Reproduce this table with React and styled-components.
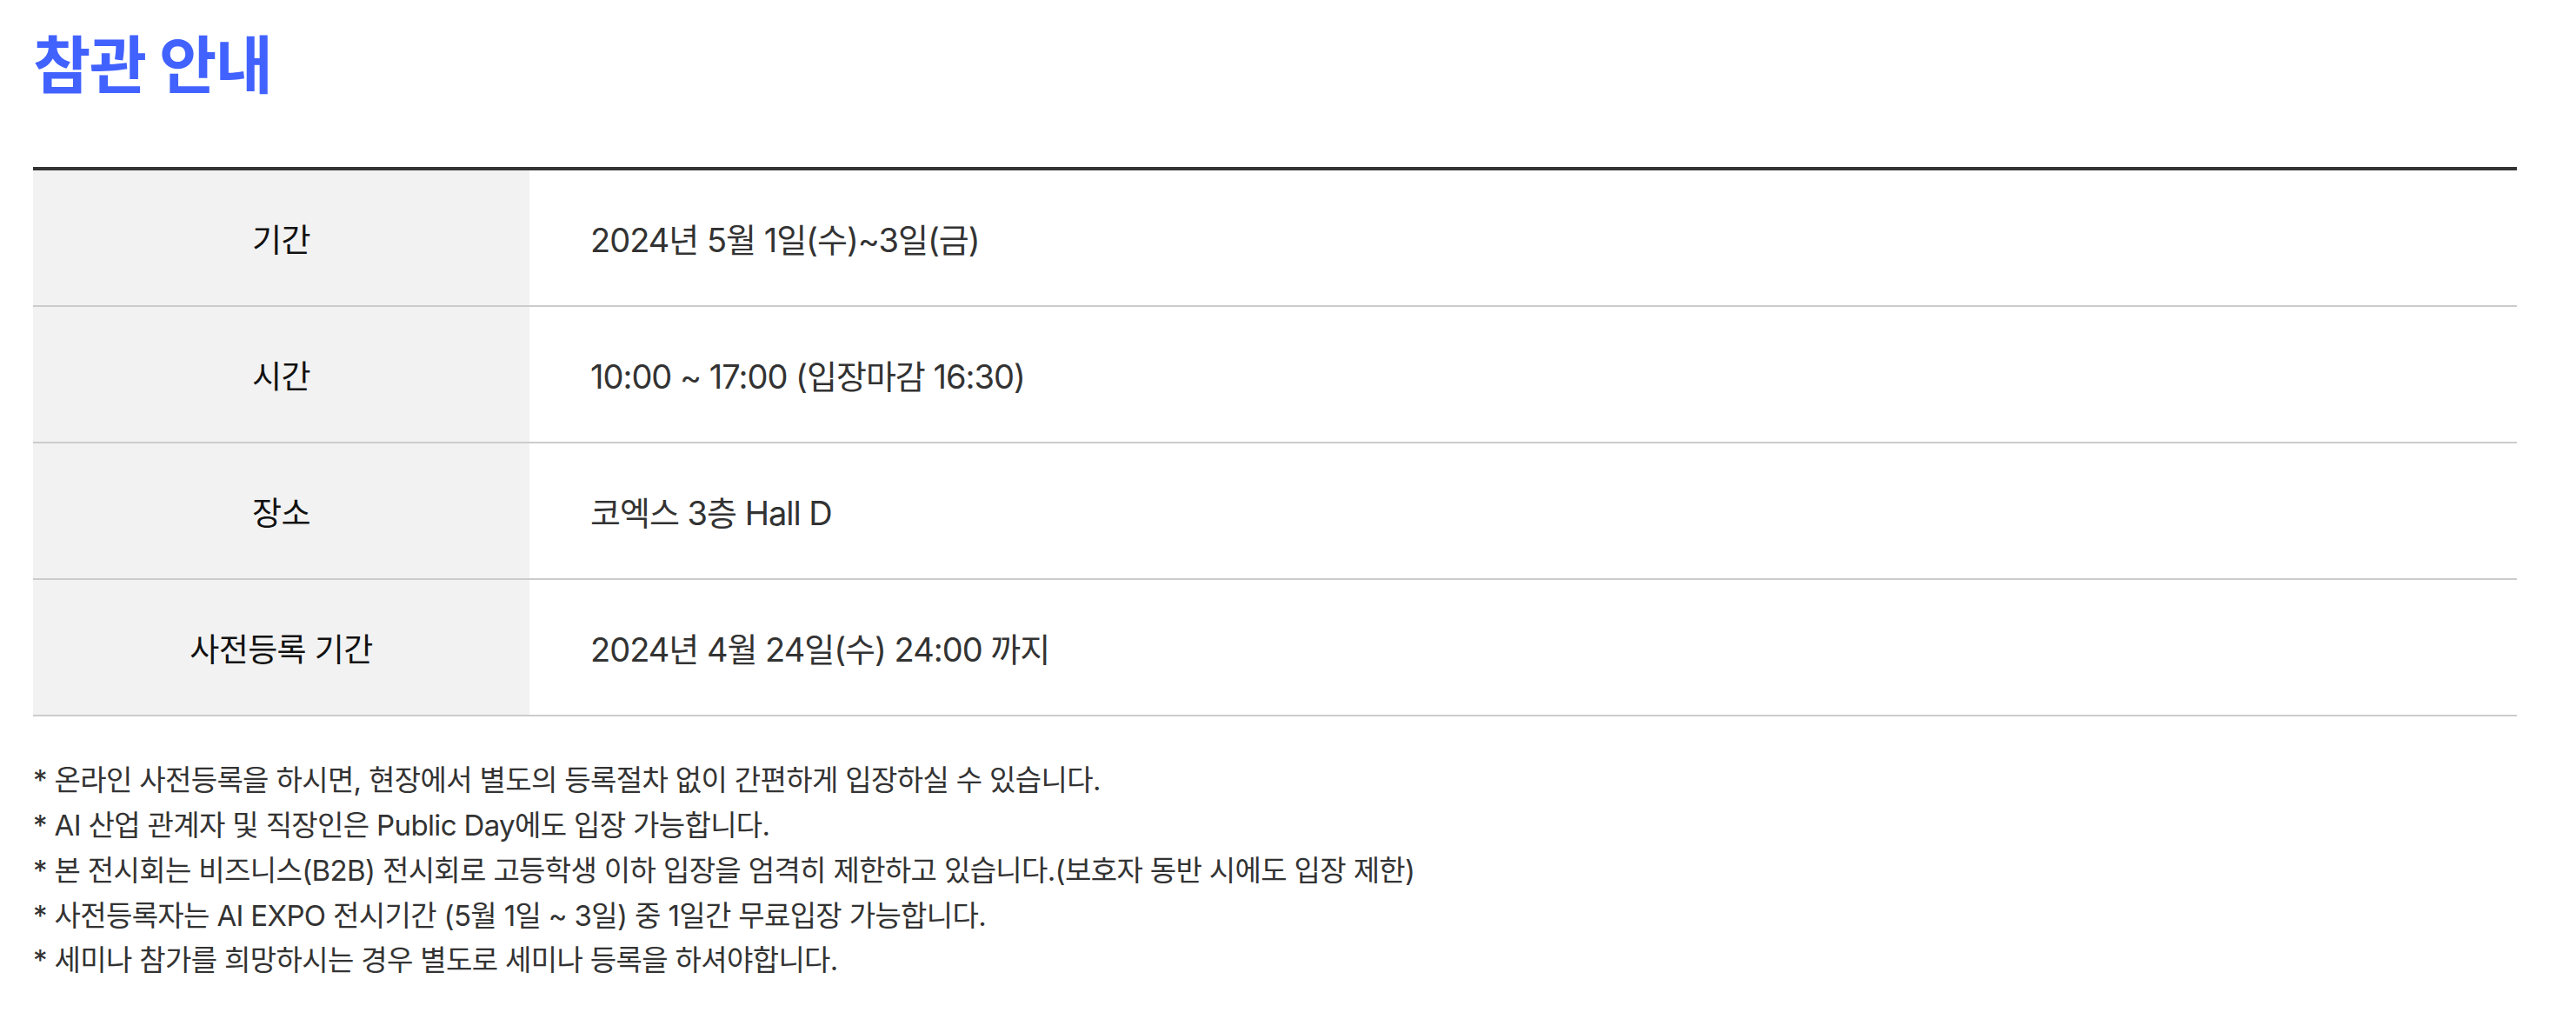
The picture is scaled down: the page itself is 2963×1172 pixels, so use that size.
import React from 'react';
import styled, { createGlobalStyle } from 'styled-components';

const GlobalStyle = createGlobalStyle`
  html, body { margin: 0; padding: 0; background: #fff; }
  body { font-family: Inter, "Noto Sans CJK KR", sans-serif; }
`;

const Page = styled.div`
  padding: 32px 68px 40px 38px;
`;

const Title = styled.h2`
  margin: 0;
  font-size: 72px;
  font-weight: 700;
  color: #4262ff;
  line-height: 1.2;
  letter-spacing: -1.5px;
`;

const Table = styled.div`
  margin-top: 74px;
  border-top: 4px solid #333;
`;

const Row = styled.div`
  display: grid;
  grid-template-columns: 571px 1fr;
  height: 155px;
  border-bottom: 2px solid #ccc;
`;

const Label = styled.div`
  background: #f2f2f2;
  display: flex;
  align-items: center;
  justify-content: center;
  font-size: 37px;
  font-weight: 400;
  color: #111;
  letter-spacing: -0.6px;
`;

const Value = styled.div`
  display: flex;
  align-items: center;
  padding-left: 70px;
  font-size: 38px;
  color: #333;
  letter-spacing: -1px;
`;

const Notes = styled.ul`
  list-style: none;
  margin: 48px 0 0;
  padding: 0;
`;

const Note = styled.li`
  font-size: 33px;
  line-height: 51.7px;
  color: #333;
  letter-spacing: -0.65px;
`;

const rows = [
  ['기간', '2024년 5월 1일(수)~3일(금)'],
  ['시간', '10:00 ~ 17:00 (입장마감 16:30)'],
  ['장소', '코엑스 3층 Hall D'],
  ['사전등록 기간', '2024년 4월 24일(수) 24:00 까지'],
];

const notes = [
  '* 온라인 사전등록을 하시면, 현장에서 별도의 등록절차 없이 간편하게 입장하실 수 있습니다.',
  '* AI 산업 관계자 및 직장인은 Public Day에도 입장 가능합니다.',
  '* 본 전시회는 비즈니스(B2B) 전시회로 고등학생 이하 입장을 엄격히 제한하고 있습니다.(보호자 동반 시에도 입장 제한)',
  '* 사전등록자는 AI EXPO 전시기간 (5월 1일 ~ 3일) 중 1일간 무료입장 가능합니다.',
  '* 세미나 참가를 희망하시는 경우 별도로 세미나 등록을 하셔야합니다.',
];

export default function App() {
  return (
    <>
      <GlobalStyle />
      <Page>
        <Title>참관 안내</Title>
        <Table>
          {rows.map(([k, v]) => (
            <Row key={k}>
              <Label>{k}</Label>
              <Value>{v}</Value>
            </Row>
          ))}
        </Table>
        <Notes>
          {notes.map((n) => (
            <Note key={n}>{n}</Note>
          ))}
        </Notes>
      </Page>
    </>
  );
}
